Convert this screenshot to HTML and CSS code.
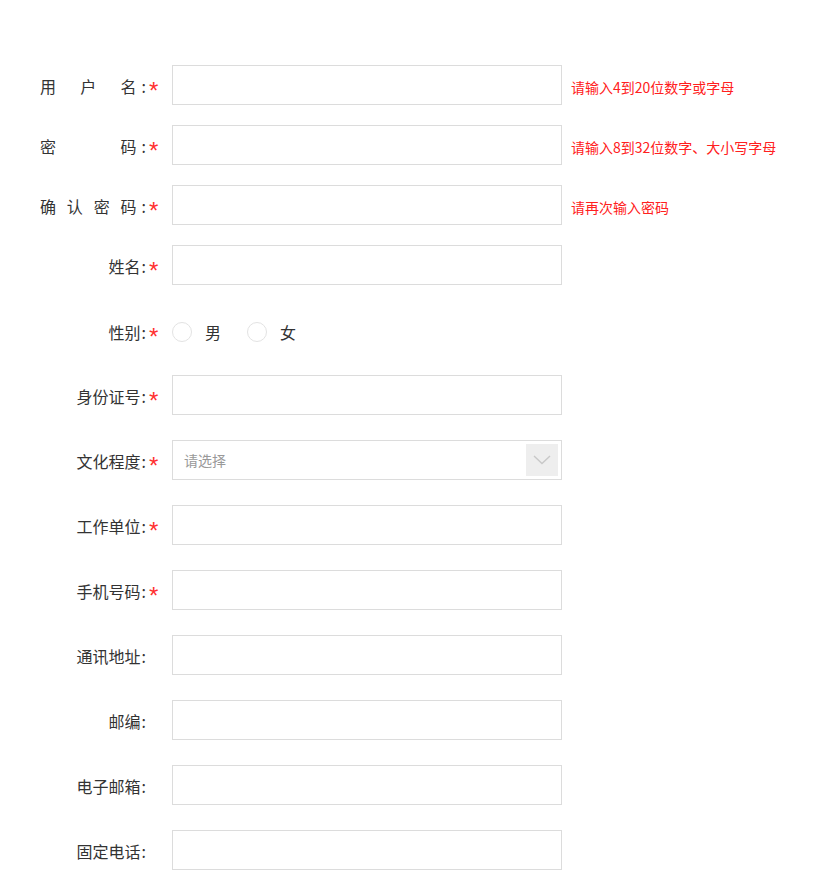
FILE: index.html
```html
<!DOCTYPE html>
<html lang="zh-CN">
<head>
<meta charset="utf-8">
<title>注册</title>
<link rel="stylesheet" href="styles.css">
</head>
<body>
<form class="form">
  <div class="row">
    <label class="label"><span class="name spread"><span>用</span><span>户</span><span>名</span></span><span class="colon">:</span></label>
    <span class="req">*</span>
    <input class="field" type="text">
    <span class="hint">请输入4到20位数字或字母</span>
  </div>
  <div class="row">
    <label class="label"><span class="name spread"><span>密</span><span>码</span></span><span class="colon">:</span></label>
    <span class="req">*</span>
    <input class="field" type="password">
    <span class="hint">请输入8到32位数字、大小写字母</span>
  </div>
  <div class="row">
    <label class="label"><span class="name spread"><span>确</span><span>认</span><span>密</span><span>码</span></span><span class="colon">:</span></label>
    <span class="req">*</span>
    <input class="field" type="password">
    <span class="hint">请再次输入密码</span>
  </div>
  <div class="row">
    <label class="label"><span class="name">姓名</span><span class="colon">:</span></label>
    <span class="req">*</span>
    <input class="field" type="text">
  </div>
  <div class="row row-radio">
    <label class="label"><span class="name">性别</span><span class="colon">:</span></label>
    <span class="req">*</span>
    <div class="radios">
      <span class="radio"></span><span class="radio-text">男</span>
      <span class="radio"></span><span class="radio-text">女</span>
    </div>
  </div>
  <div class="row row-wide">
    <label class="label"><span class="name">身份证号</span><span class="colon">:</span></label>
    <span class="req">*</span>
    <input class="field" type="text">
  </div>
  <div class="row row-wide">
    <label class="label"><span class="name">文化程度</span><span class="colon">:</span></label>
    <span class="req">*</span>
    <div class="field select">
      <span class="placeholder">请选择</span>
      <span class="select-btn"><svg width="18" height="10" viewBox="0 0 18 10"><path d="M1 1 L9 8.5 L17 1" fill="none" stroke="#c8c8c8" stroke-width="1.4"/></svg></span>
    </div>
  </div>
  <div class="row row-wide">
    <label class="label"><span class="name">工作单位</span><span class="colon">:</span></label>
    <span class="req">*</span>
    <input class="field" type="text">
  </div>
  <div class="row row-wide">
    <label class="label"><span class="name">手机号码</span><span class="colon">:</span></label>
    <span class="req">*</span>
    <input class="field" type="text">
  </div>
  <div class="row row-wide">
    <label class="label"><span class="name">通讯地址</span><span class="colon">:</span></label>
    <span class="req"></span>
    <input class="field" type="text">
  </div>
  <div class="row row-wide">
    <label class="label"><span class="name">邮编</span><span class="colon">:</span></label>
    <span class="req"></span>
    <input class="field" type="text">
  </div>
  <div class="row row-wide">
    <label class="label"><span class="name">电子邮箱</span><span class="colon">:</span></label>
    <span class="req"></span>
    <input class="field" type="text">
  </div>
  <div class="row row-wide">
    <label class="label"><span class="name">固定电话</span><span class="colon">:</span></label>
    <span class="req"></span>
    <input class="field" type="text">
  </div>
</form>
</body>
</html>
```

FILE: styles.css
```css
html, body {
  margin: 0;
  padding: 0;
  background: #fff;
}
body {
  font-family: "Noto Sans CJK SC", "Noto Sans", sans-serif;
  color: #333;
  font-size: 16px;
}
.form {
  padding: 65px 0 0 40px;
}
.row {
  display: flex;
  align-items: center;
  height: 40px;
  margin-bottom: 20px;
}
.row-radio {
  height: 52px;
  margin-top: 0;
  margin-bottom: 18px;
}
.row-wide {
  margin-bottom: 25px;
}
.label {
  width: 106px;
  display: flex;
  justify-content: flex-end;
  align-items: center;
  font-size: 16px;
  line-height: 20px;
  padding-top: 2px;
  white-space: nowrap;
}
.name {
  display: flex;
}
.name.spread {
  flex: 1;
  justify-content: space-between;
  padding-right: 4px;
}
.colon {
  margin-left: 1px;
}
.req {
  width: 26px;
  box-sizing: border-box;
  padding-left: 3px;
  color: #ff3030;
  font-family: "Liberation Sans", sans-serif;
  font-size: 24px;
  line-height: 20px;
  padding-top: 16px;
  height: 40px;
}
.field {
  box-sizing: border-box;
  width: 390px;
  height: 40px;
  border: 1px solid #dcdcdc;
  margin: 0;
  padding: 0 11px;
  font: inherit;
  font-size: 14px;
  background: #fff;
  outline: none;
}
.hint {
  margin-left: 9px;
  padding-top: 3px;
  font-size: 14px;
  color: #ff2020;
  white-space: nowrap;
}
.radios {
  display: flex;
  align-items: center;
  padding-top: 2px;
}
.radio {
  box-sizing: border-box;
  width: 20px;
  height: 20px;
  border: 1px solid #e3e3e3;
  border-radius: 50%;
  margin-right: 13px;
}
.radio-text {
  font-size: 16px;
  margin-right: 26px;
}
.select {
  display: flex;
  align-items: center;
  justify-content: space-between;
  padding: 0 3px 0 11px;
}
.placeholder {
  color: #999;
  font-size: 14px;
}
.select-btn {
  width: 32px;
  height: 32px;
  background: #eee;
  display: flex;
  align-items: center;
  justify-content: center;
}
```
